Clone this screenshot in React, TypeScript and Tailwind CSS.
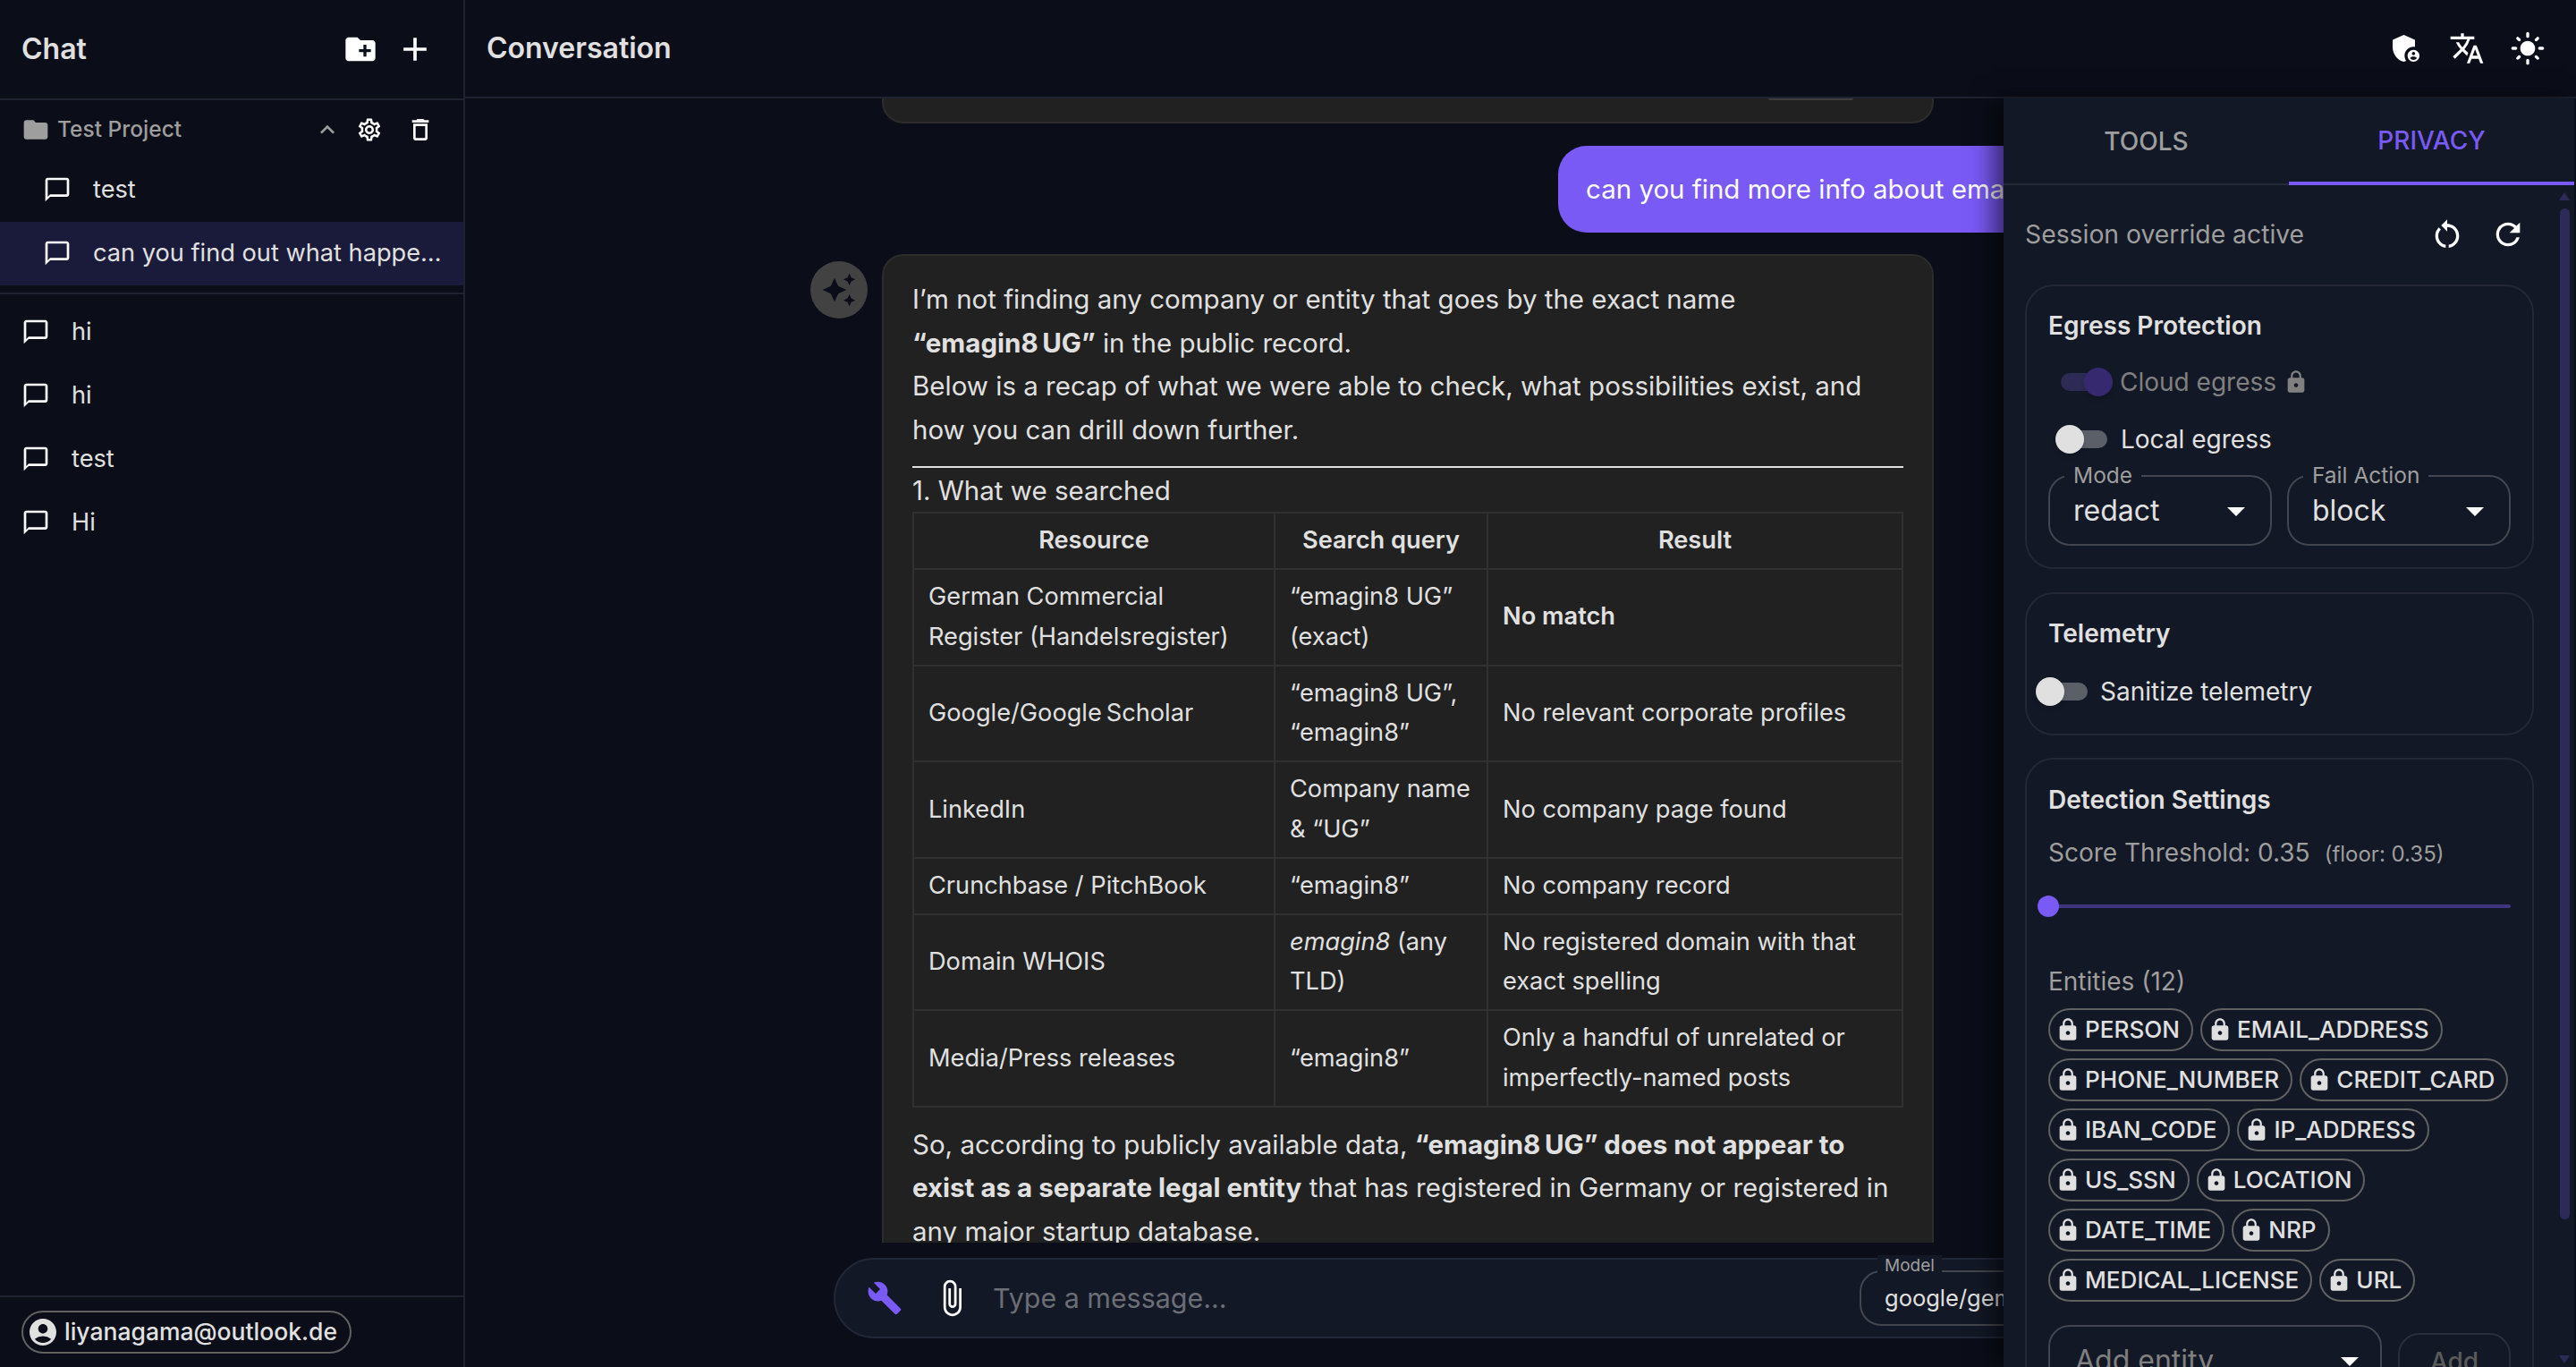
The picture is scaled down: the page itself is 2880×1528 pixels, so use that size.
import React from 'react';
import {
  MdAccountCircle,
  MdAdd,
  MdAdminPanelSettings,
  MdArrowDropDown,
  MdAttachFile,
  MdAutoAwesome,
  MdBuild,
  MdChatBubbleOutline,
  MdCreateNewFolder,
  MdFolder,
  MdKeyboardArrowUp,
  MdLightMode,
  MdLock,
  MdOutlineDelete,
  MdOutlineSettings,
  MdRefresh,
  MdRestartAlt,
  MdTranslate,
} from 'react-icons/md';

const entities = [
  'PERSON',
  'EMAIL_ADDRESS',
  'PHONE_NUMBER',
  'CREDIT_CARD',
  'IBAN_CODE',
  'IP_ADDRESS',
  'US_SSN',
  'LOCATION',
  'DATE_TIME',
  'NRP',
  'MEDICAL_LICENSE',
  'URL',
];

const ChatRow = ({ label, nested, active }: { label: string; nested?: boolean; active?: boolean }) => (
  <div
    className={`flex h-[71px] items-center pb-[1px] text-[27.2px] text-[#e0e0e0] ${nested ? 'gap-[24px] pl-[48px] pr-[24px]' : 'gap-[24px] pl-[24px]'} ${active ? 'bg-[#1a1a3a]' : ''}`}
  >
    <MdChatBubbleOutline size={32} className="shrink-0 text-white" />
    <span className="truncate">{label}</span>
  </div>
);

const Toggle = ({ on, muted }: { on?: boolean; muted?: boolean }) => (
  <div className={`relative h-[20px] w-[52px] rounded-full ${muted ? 'bg-[#2d2a55]' : 'bg-[#5b5f67]'}`}>
    <div
      className={`absolute top-[-6px] h-[32px] w-[32px] rounded-full shadow-md ${on ? 'left-[26px]' : 'left-[-6px]'} ${muted ? 'bg-[#37296f]' : 'bg-[#e0e0e0]'}`}
    />
  </div>
);

const Outlined = ({ label, value, className }: { label: string; value: string; className: string }) => (
  <div className={`relative flex h-[79px] items-center justify-between rounded-[24px] border-2 border-[#43464f] pl-[26px] pr-[14px] ${className}`}>
    <span className="absolute left-[16px] top-[-18px] bg-[#131826] px-[10px] text-[24.5px] leading-[32px] text-[#9e9e9e]">{label}</span>
    <span className="text-[32px] text-[#e0e0e0]">{value}</span>
    <MdArrowDropDown size={48} className="text-white" />
  </div>
);

const Th = ({ children }: { children: React.ReactNode }) => (
  <th className="border-2 border-[#303030] px-[16px] py-[8px] text-center font-semibold">{children}</th>
);

const Td = ({ children }: { children: React.ReactNode }) => (
  <td className="border-2 border-[#303030] px-[16px] py-[8px] align-middle">{children}</td>
);

const Card = ({ className, children }: { className: string; children: React.ReactNode }) => (
  <div className={`rounded-[32px] border-2 border-[#232736] px-[24px] ${className}`}>{children}</div>
);

export default function App() {
  return (
    <div className="relative flex h-screen w-screen overflow-hidden bg-[#0b0e19] font-['Inter',sans-serif] text-[#e0e0e0]">
      {/* Sidebar */}
      <aside className="flex w-[520px] shrink-0 flex-col border-r-2 border-[#1f2230]">
        <div className="flex h-[112px] shrink-0 items-center justify-between border-b-2 border-[#1f2230] pl-[24px] pr-[32px]">
          <span className="text-[32px] font-semibold">Chat</span>
          <div className="flex items-center gap-[19px] text-white">
            <MdCreateNewFolder size={40} />
            <MdAdd size={44} />
          </div>
        </div>

        <div className="flex h-[65px] shrink-0 items-center pl-[24px] pr-[32px] text-[#9e9e9e]">
          <MdFolder size={32} className="mr-[8px]" />
          <span className="text-[24.5px] font-medium">Test Project</span>
          <div className="ml-auto flex items-center">
            <MdKeyboardArrowUp size={32} className="mr-[16px]" />
            <MdOutlineSettings size={30} className="mr-[26px] text-white" />
            <MdOutlineDelete size={32} className="text-white" />
          </div>
        </div>
        <ChatRow label="test" nested />
        <ChatRow label="can you find out what happened to emagin8" nested active />
        <div className="mb-[7px] mt-[8px] h-[2px] bg-[#1f2230]" />
        <ChatRow label="hi" />
        <ChatRow label="hi" />
        <ChatRow label="test" />
        <ChatRow label="Hi" />

        <div className="mt-auto border-t-2 border-[#1f2230] px-[24px] pb-[15px] pt-[15px]">
          <div className="flex h-[48px] w-fit items-center gap-[6px] rounded-full border-2 border-[#616161] pl-[4px] pr-[14px]">
            <MdAccountCircle size={36} className="text-[#e0e0e0]" />
            <span className="text-[26.5px] font-medium">liyanagama@outlook.de</span>
          </div>
        </div>
      </aside>

      {/* Main */}
      <main className="flex min-w-0 flex-1 flex-col">
        <header className="flex h-[110px] shrink-0 items-center justify-between border-b-2 border-[#1f2230] pl-[24px] pr-[34px]">
          <span className="text-[32px] font-semibold">Conversation</span>
          <div className="flex items-center gap-[28px] text-white">
            <MdAdminPanelSettings size={40} />
            <MdTranslate size={40} />
            <MdLightMode size={40} />
          </div>
        </header>

        <div className="h-[1279px] shrink-0 overflow-hidden">
          {/* previous answer, scrolled away */}
          <div className="ml-[466px] h-[28px] w-[1176px] rounded-b-[24px] border-x-2 border-b-2 border-[#2c2c2c] bg-[#212121]">
            <div className="flex justify-end pr-[88px]">
              <div className="h-[2px] w-[95px] rounded-b-md bg-[#3d3d3d]" />
            </div>
          </div>

          <div className="ml-[1222px] mt-[25px] flex h-[97px] w-[900px] items-center whitespace-nowrap rounded-[32px] bg-[#7a5af5] pl-[31px] text-[29.5px] text-white">
            can you find more info about emagin8 UG?
          </div>

          <div className="ml-[386px] mt-[24px] flex items-start gap-[16px]">
            <div className="mt-[8px] flex h-[64px] w-[64px] shrink-0 items-center justify-center rounded-full bg-[#424242]">
              <MdAutoAwesome size={40} className="text-[#0b0e19]" />
            </div>
            <div className="w-[1176px] rounded-[24px] border-2 border-[#2c2c2c] bg-[#212121] px-[32px] pb-[26px] pt-[24px] text-[29.5px] leading-[48.64px]">
              <p>
                I’m not finding any company or entity that goes by the exact name <br />
                <strong className="font-bold">“emagin8{'\u202f'}UG”</strong> in the public record.
                <br />
                Below is a recap of what we were able to check, what possibilities exist, and how you can drill down further.
              </p>
              <div className="mb-[1px] mt-[16px] h-[2px] bg-[#e0e0e0]" />
              <p>1. What we searched</p>
              <table className="w-full table-fixed border-collapse text-[27.2px] leading-[44.8px]">
                <colgroup>
                  <col className="w-[404px]" />
                  <col className="w-[238px]" />
                  <col />
                </colgroup>
                <thead>
                  <tr>
                    <Th>Resource</Th>
                    <Th>Search query</Th>
                    <Th>Result</Th>
                  </tr>
                </thead>
                <tbody>
                  <tr>
                    <Td>German Commercial Register (Handelsregister)</Td>
                    <Td>“emagin8 UG” (exact)</Td>
                    <Td><strong className="font-semibold">No match</strong></Td>
                  </tr>
                  <tr>
                    <Td>Google/Google{'\u202f'}Scholar</Td>
                    <Td>“emagin8 UG”, “emagin8”</Td>
                    <Td>No relevant corporate profiles</Td>
                  </tr>
                  <tr>
                    <Td>LinkedIn</Td>
                    <Td>Company name &amp; “UG”</Td>
                    <Td>No company page found</Td>
                  </tr>
                  <tr>
                    <Td>Crunchbase / PitchBook</Td>
                    <Td>“emagin8”</Td>
                    <Td>No company record</Td>
                  </tr>
                  <tr>
                    <Td>Domain WHOIS</Td>
                    <Td><em>emagin8</em> (any TLD)</Td>
                    <Td>No registered domain with that exact spelling</Td>
                  </tr>
                  <tr>
                    <Td>Media/Press releases</Td>
                    <Td>“emagin8”</Td>
                    <Td>Only a handful of unrelated or imperfectly-named posts</Td>
                  </tr>
                </tbody>
              </table>
              <p className="mt-[17px]">
                So, according to publicly available data,{' '}
                <strong className="font-bold">“emagin8{'\u202f'}UG” does not appear to exist as a separate legal entity</strong> that has
                registered in Germany or registered in any major startup database.
              </p>
            </div>
          </div>
        </div>

        {/* Composer */}
        <div className="ml-[412px] mt-[17px] flex h-[90px] w-[1536px] shrink-0 items-center rounded-[45px] border-2 border-[#222738] bg-[#131826] pl-[35px] pr-[27px]">
          <MdBuild size={40} className="shrink-0 text-[#7a5af5]" />
          <MdAttachFile size={44} className="ml-[33px] shrink-0 text-white" />
          <input
            placeholder="Type a message..."
            className="ml-[24px] min-w-0 flex-1 bg-transparent pt-[2px] text-[30.4px] outline-none placeholder:text-[#6b6e75]"
          />
          <div className="relative flex h-[62px] w-[360px] shrink-0 items-center rounded-[24px] border-2 border-[#43464f] pl-[26px]">
            <span className="absolute left-[18px] top-[-19px] bg-[#131826] px-[8px] text-[19px] leading-[24px] text-[#9e9e9e]">Model</span>
            <span className="whitespace-nowrap text-[25.5px]">google/gemini-2.5-flash</span>
          </div>
        </div>
      </main>

      {/* Right drawer */}
      <section className="absolute bottom-0 right-0 top-[110px] w-[640px] overflow-hidden border-r-2 border-[#0c0f1a] bg-[#131826] shadow-[-12px_0_24px_rgba(0,0,0,0.55)]">
        <div className="flex h-[97px] border-b-2 border-[#232736] text-[28px] font-medium">
          <div className="flex flex-1 items-center justify-center text-[#9e9e9e]">TOOLS</div>
          <div className="mb-[-2px] flex flex-1 items-center justify-center border-b-4 border-[#7a5af5] text-[#7a5af5]">PRIVACY</div>
        </div>

        <div className="pl-[24px] pr-[45px]">
          <div className="mt-[24px] flex h-[62px] items-center justify-between pr-[9px] text-[28.3px] text-[#9e9e9e]">
            <span>Session override active</span>
            <div className="flex items-center gap-[28px] text-white">
              <MdRestartAlt size={40} />
              <MdRefresh size={40} />
            </div>
          </div>

          <Card className="mt-[25px] pb-[24px] pt-[20px]">
            <div className="text-[28px] font-semibold leading-[48px]">Egress Protection</div>
            <div className="mt-[7px] flex h-[64px] items-center pl-[14px] text-[#808080]">
              <Toggle on muted />
              <span className="ml-[14px] text-[28px]">Cloud egress</span>
              <MdLock size={28} className="ml-[8px]" />
            </div>
            <div className="flex h-[64px] items-center pl-[14px]">
              <Toggle />
              <span className="ml-[15px] text-[28px]">Local egress</span>
            </div>
            <div className="mt-[8px] flex gap-[17px]">
              <Outlined label="Mode" value="redact" className="w-[250px]" />
              <Outlined label="Fail Action" value="block" className="w-[250px]" />
            </div>
          </Card>

          <Card className="mt-[26px] h-[160px] pt-[20px]">
            <div className="text-[28px] font-semibold leading-[48px]">Telemetry</div>
            <div className="ml-[-8px] mt-[9px] flex h-[64px] items-center">
              <Toggle />
              <span className="ml-[14px] text-[28px]">Sanitize telemetry</span>
            </div>
          </Card>

          <Card className="mt-[25px] h-[900px] pt-[21px]">
            <div className="text-[28px] font-semibold leading-[48px]">Detection Settings</div>
            <div className="mt-[11px] flex items-baseline text-[28px] leading-[48px] text-[#9e9e9e]">
              <span>Score Threshold: 0.35</span>
              <span className="ml-[16px] text-[24px]">(floor: 0.35)</span>
            </div>
            <div className="relative mt-[22px] flex h-[24px] items-center">
              <div className="h-[4px] w-[518px] rounded-full bg-[#3f3580]" />
              <div className="absolute left-[-12px] h-[24px] w-[24px] rounded-full bg-[#7a5af5]" />
            </div>
            <div className="mt-[50px] text-[28px] leading-[44px] text-[#9e9e9e]">Entities (12)</div>
            <div className="mt-[8px] flex flex-wrap gap-x-[8px] gap-y-[8px]">
              {entities.map((name) => (
                <span
                  key={name}
                  className="flex h-[48px] items-center gap-[5px] rounded-full border-2 border-[#616161] pl-[6px] pr-[13px] text-[26.1px] font-medium"
                >
                  <MdLock size={28} />
                  {name}
                </span>
              ))}
            </div>
            <div className="mt-[26px] flex items-start gap-[18px]">
              <div className="flex h-[80px] w-[373px] items-center justify-between rounded-[24px] border-2 border-[#43464f] pl-[28px] pr-[10px] text-[32px] text-[#808080]">
                Add entity
                <MdArrowDropDown size={48} className="text-white" />
              </div>
              <div className="mt-[9px] flex h-[64px] w-[126px] items-center justify-center rounded-[24px] border-2 border-[#2a2e3a] text-[28px] font-medium text-[#5a5a5a]">
                Add
              </div>
            </div>
          </Card>
        </div>

        {/* Scrollbar */}
        <div className="absolute right-[5px] top-[105px] h-0 w-0 border-x-[6px] border-b-[9px] border-x-transparent border-b-[#2d2a5a]" />
        <div className="absolute right-[5px] top-[123px] h-[1130px] w-[11px] rounded-full bg-[#2d2a5a]" />
        <div className="absolute bottom-[4px] right-[5px] h-0 w-0 border-x-[6px] border-t-[9px] border-x-transparent border-t-[#2d2a5a]" />
      </section>
    </div>
  );
}
